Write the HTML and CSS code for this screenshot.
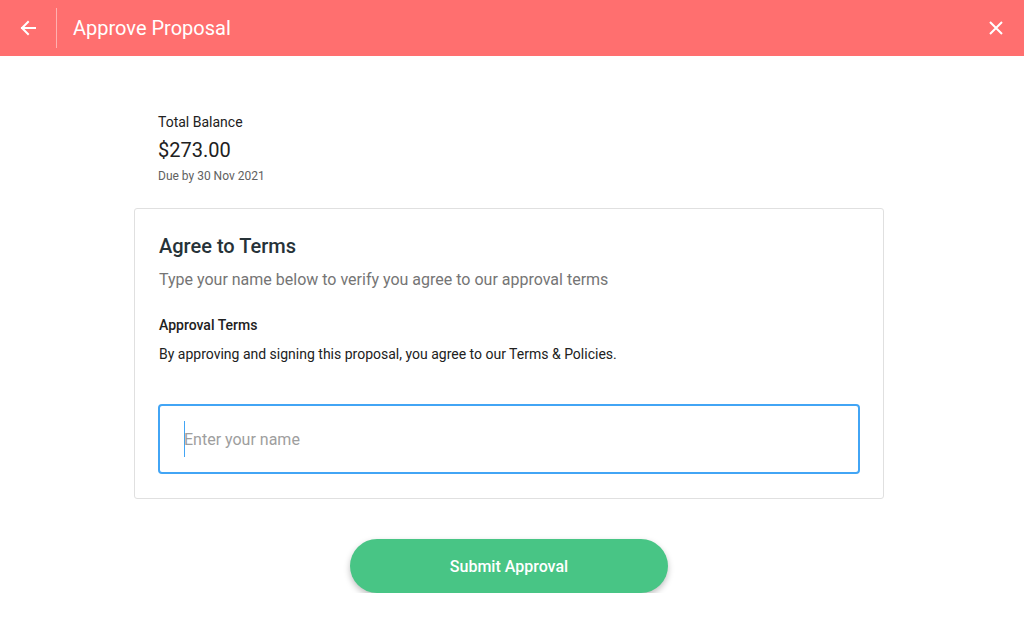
FILE: index.html
```html
<!DOCTYPE html>
<html>
<head>
<meta charset="utf-8">
<link rel="stylesheet" href="styles.css">
</head>
<body>
<header class="topbar">
  <button class="icon-btn back" aria-label="Back">
    <svg width="18" height="18" viewBox="0 0 18 18"><path d="M16 9H3M9 3L3 9l6 6" fill="none" stroke="#fff" stroke-width="2" stroke-linecap="square"/></svg>
  </button>
  <div class="divider"></div>
  <h1 class="title">Approve Proposal</h1>
  <button class="icon-btn close" aria-label="Close">
    <svg width="16" height="16" viewBox="0 0 16 16"><path d="M2 2L14 14M14 2L2 14" fill="none" stroke="#fff" stroke-width="2"/></svg>
  </button>
</header>
<main class="content">
  <section class="balance">
    <div class="balance-label">Total Balance</div>
    <div class="balance-amount">$273.00</div>
    <div class="balance-due">Due by 30 Nov 2021</div>
  </section>
  <section class="card">
    <h2 class="card-title">Agree to Terms</h2>
    <p class="card-sub">Type your name below to verify you agree to our approval terms</p>
    <h3 class="terms-title">Approval Terms</h3>
    <p class="terms-text">By approving and signing this proposal, you agree to our Terms &amp; Policies.</p>
    <div class="name-field">
      <span class="caret"></span><span class="placeholder">Enter your name</span>
    </div>
  </section>
  <div class="actions">
    <button class="submit">Submit Approval</button>
  </div>
</main>
</body>
</html>
```
FILE: styles.css
```css
* { box-sizing: border-box; }
html, body { margin: 0; padding: 0; background: #fff; }
body { font-family: Roboto, "Noto Sans", "Liberation Sans", sans-serif; color: #212121; }

.topbar {
  height: 56px;
  background: #ff6f6f;
  display: flex;
  align-items: center;
  color: #fff;
}
.icon-btn {
  background: none; border: 0; padding: 0; cursor: pointer;
  display: flex; align-items: center; justify-content: center;
}
.back { width: 56px; height: 56px; }
.divider { width: 1px; height: 40px; background: rgba(255,255,255,0.45); }
.title { margin: 0 0 0 16px; font-size: 20px; font-weight: 400; flex: 1; }
.close { width: 56px; height: 56px; }

.content { padding: 58px 0 0 134px; width: 884px; }
.balance { padding-left: 24px; }
.balance-label { font-size: 14px; line-height: 16px; color: #212121; }
.balance-amount { font-size: 20px; line-height: 24px; margin-top: 8px; color: #212121; }
.balance-due { font-size: 12px; line-height: 14px; margin-top: 7px; color: #616161; }

.card {
  margin-top: 25px;
  border: 1px solid #e0e0e0;
  border-radius: 3px;
  padding: 25px 23px 24px 24px;
}
.card-title { margin: 0; font-size: 20px; font-weight: 500; color: #263238; line-height: 24px; }
.card-sub { margin: 12px 0 0; font-size: 16px; line-height: 20px; color: #757575; }
.terms-title { margin: 27px 0 0; font-size: 14px; font-weight: 500; line-height: 16px; color: #212121; }
.terms-text { margin: 13px 0 0; font-size: 14px; line-height: 16px; color: #212121; }
.name-field {
  margin: 42px 0 0 -1px;
  height: 70px;
  border: 2px solid #42a5f5;
  border-radius: 4px;
  display: flex;
  align-items: center;
  padding-left: 24px;
}
.caret { width: 1px; height: 36px; background: #42a5f5; margin-right: -1px; }
.placeholder { font-size: 16px; color: #9e9e9e; }

.actions { display: flex; justify-content: center; margin-top: 40px; }
.submit {
  width: 318px; height: 54px;
  border: 0; border-radius: 27px;
  background: #48c585;
  color: #fff;
  font-family: inherit;
  font-size: 16px; font-weight: 500;
  box-shadow: 0 3px 6px rgba(0,0,0,0.25);
}
```
